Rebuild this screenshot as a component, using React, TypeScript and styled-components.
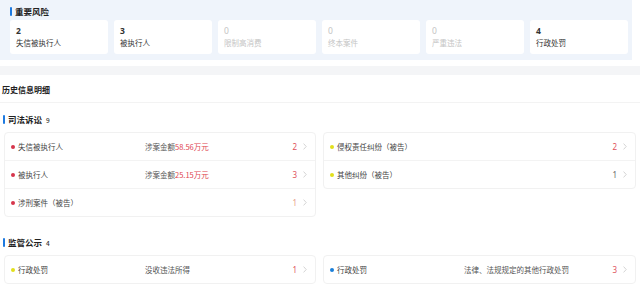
import React from "react";
import styled, { createGlobalStyle } from "styled-components";

const Global = createGlobalStyle`
  html, body { margin: 0; padding: 0; background: #ffffff; }
  body {
    font-family: "Noto Sans CJK SC", "Noto Sans", sans-serif;
    color: #333;
    width: 640px;
    overflow: hidden;
  }
  * { box-sizing: border-box; }
`;

const Page = styled.div`
  width: 640px;
  display: flex;
  flex-direction: column;
`;

const TopPanel = styled.section`
  width: 632px;
  height: 60px;
  background: #eff4fb;
  padding: 6px 4px 0 10px;
  display: flex;
  flex-direction: column;
  gap: 4px;
`;

const BarTitle = styled.div<{ $size?: number }>`
  display: flex;
  align-items: center;
  gap: 3px;
  height: 10px;
  line-height: 10px;
  font-size: ${(p) => p.$size ?? 8.5}px;
  font-weight: 700;
  color: #222;
  &::before {
    content: "";
    width: 2px;
    height: 9px;
    background: #1e7ae0;
    border-radius: 1px;
  }
`;

const Count = styled.span`
  font-size: 6.5px;
  font-weight: 500;
  color: #333;
  margin-left: 1px;
  margin-top: 1px;
`;

const CardGrid = styled.div`
  display: grid;
  grid-template-columns: repeat(6, 98px);
  gap: 6px;
`;

const RiskCard = styled.div<{ $muted: boolean }>`
  height: 34px;
  background: #ffffff;
  border-radius: 3px;
  padding: 5px 6px 0;
  color: ${(p) => (p.$muted ? "#c4c4c4" : "#333")};
  display: flex;
  flex-direction: column;
`;

const RiskNum = styled.div<{ $muted: boolean }>`
  font-size: 8.5px;
  line-height: 11px;
  font-weight: ${(p) => (p.$muted ? 400 : 700)};
  font-family: "Noto Sans", "Noto Sans CJK SC", sans-serif;
`;

const RiskLabel = styled.div`
  font-size: 7.5px;
  line-height: 13px;
`;

const Spacer = styled.div`
  height: 6px;
`;

const GrayBand = styled.div`
  height: 9px;
  background: #f4f5f7;
`;

const Heading = styled.div`
  height: 28px;
  padding: 8px 0 0 2px;
  font-size: 8px;
  line-height: 14px;
  font-weight: 700;
  color: #222;
  border-bottom: 1px solid #f3f3f3;
`;

const Section = styled.section<{ $top: number }>`
  margin-top: ${(p) => p.$top}px;
  padding: 0 4px;
  display: flex;
  flex-direction: column;
  gap: 7px;
`;

const SectionTitle = styled(BarTitle)`
  height: 12px;
  line-height: 12px;
  margin-left: -1px;
`;

const Columns = styled.div`
  display: grid;
  grid-template-columns: 312px 313px;
  gap: 7px;
  align-items: start;
`;

const ListCard = styled.div`
  border: 1px solid #f1f1f1;
  border-radius: 4px;
  background: #fff;
  display: flex;
  flex-direction: column;
`;

const Row = styled.div`
  height: 27px;
  display: grid;
  grid-template-columns: 134px 1fr auto;
  align-items: center;
  padding: 0 8px 0 6px;
  font-size: 7.5px;
  color: #444;
  & + & {
    height: 28px;
    border-top: 1px solid #f3f3f3;
  }
`;

const Name = styled.div<{ $dot: string }>`
  display: flex;
  align-items: center;
  gap: 3px;
  &::before {
    content: "";
    width: 4px;
    height: 4px;
    border-radius: 50%;
    background: ${(p) => p.$dot};
  }
`;

const Middle = styled.div`
  color: #555;
`;

const Money = styled.span`
  color: #e0454f;
`;

const Right = styled.div`
  display: flex;
  align-items: center;
  gap: 6px;
`;

const Num = styled.span<{ $color: string }>`
  color: ${(p) => p.$color};
  font-size: 8px;
  font-family: "Noto Sans", sans-serif;
`;

const Chevron = () => (
  <svg width="4" height="7" viewBox="0 0 4 7" fill="none">
    <path d="M0.6 0.6 L3.2 3.5 L0.6 6.4" stroke="#cfcfcf" strokeWidth="0.9" />
  </svg>
);

const RED = "#d6354b";
const YELLOW = "#e2e01c";
const BLUE = "#1a7fd9";

type Item = {
  name: string;
  dot: string;
  mid?: React.ReactNode;
  n: number;
  nColor: string;
};

const risks = [
  { n: 2, label: "失信被执行人" },
  { n: 3, label: "被执行人" },
  { n: 0, label: "限制高消费" },
  { n: 0, label: "终本案件" },
  { n: 0, label: "严重违法" },
  { n: 4, label: "行政处罚" },
];

const judicialLeft: Item[] = [
  { name: "失信被执行人", dot: RED, mid: <>涉案金额<Money>58.56万元</Money></>, n: 2, nColor: "#e0525c" },
  { name: "被执行人", dot: RED, mid: <>涉案金额<Money>25.15万元</Money></>, n: 3, nColor: "#e0525c" },
  { name: "涉刑案件（被告）", dot: RED, n: 1, nColor: "#e8a08a" },
];

const judicialRight: Item[] = [
  { name: "侵权责任纠纷（被告）", dot: YELLOW, n: 2, nColor: "#e0525c" },
  { name: "其他纠纷（被告）", dot: YELLOW, n: 1, nColor: "#666" },
];

const superviseLeft: Item[] = [
  { name: "行政处罚", dot: YELLOW, mid: "没收违法所得", n: 1, nColor: "#e0525c" },
];

const superviseRight: Item[] = [
  { name: "行政处罚", dot: BLUE, mid: "法律、法规规定的其他行政处罚", n: 3, nColor: "#e0525c" },
];

const List = ({ items }: { items: Item[] }) => (
  <ListCard>
    {items.map((it, i) => (
      <Row key={i}>
        <Name $dot={it.dot}>{it.name}</Name>
        <Middle>{it.mid}</Middle>
        <Right>
          <Num $color={it.nColor}>{it.n}</Num>
          <Chevron />
        </Right>
      </Row>
    ))}
  </ListCard>
);

export default function App() {
  return (
    <Page>
      <Global />
      <TopPanel>
        <BarTitle>重要风险</BarTitle>
        <CardGrid>
          {risks.map((r) => (
            <RiskCard key={r.label} $muted={r.n === 0}>
              <RiskNum $muted={r.n === 0}>{r.n}</RiskNum>
              <RiskLabel>{r.label}</RiskLabel>
            </RiskCard>
          ))}
        </CardGrid>
      </TopPanel>
      <Spacer />
      <GrayBand />
      <Heading>历史信息明细</Heading>
      <Section $top={10}>
        <SectionTitle>
          司法诉讼<Count>9</Count>
        </SectionTitle>
        <Columns>
          <List items={judicialLeft} />
          <List items={judicialRight} />
        </Columns>
      </Section>
      <Section $top={19}>
        <SectionTitle>
          监管公示<Count>4</Count>
        </SectionTitle>
        <Columns>
          <List items={superviseLeft} />
          <List items={superviseRight} />
        </Columns>
      </Section>
    </Page>
  );
}
